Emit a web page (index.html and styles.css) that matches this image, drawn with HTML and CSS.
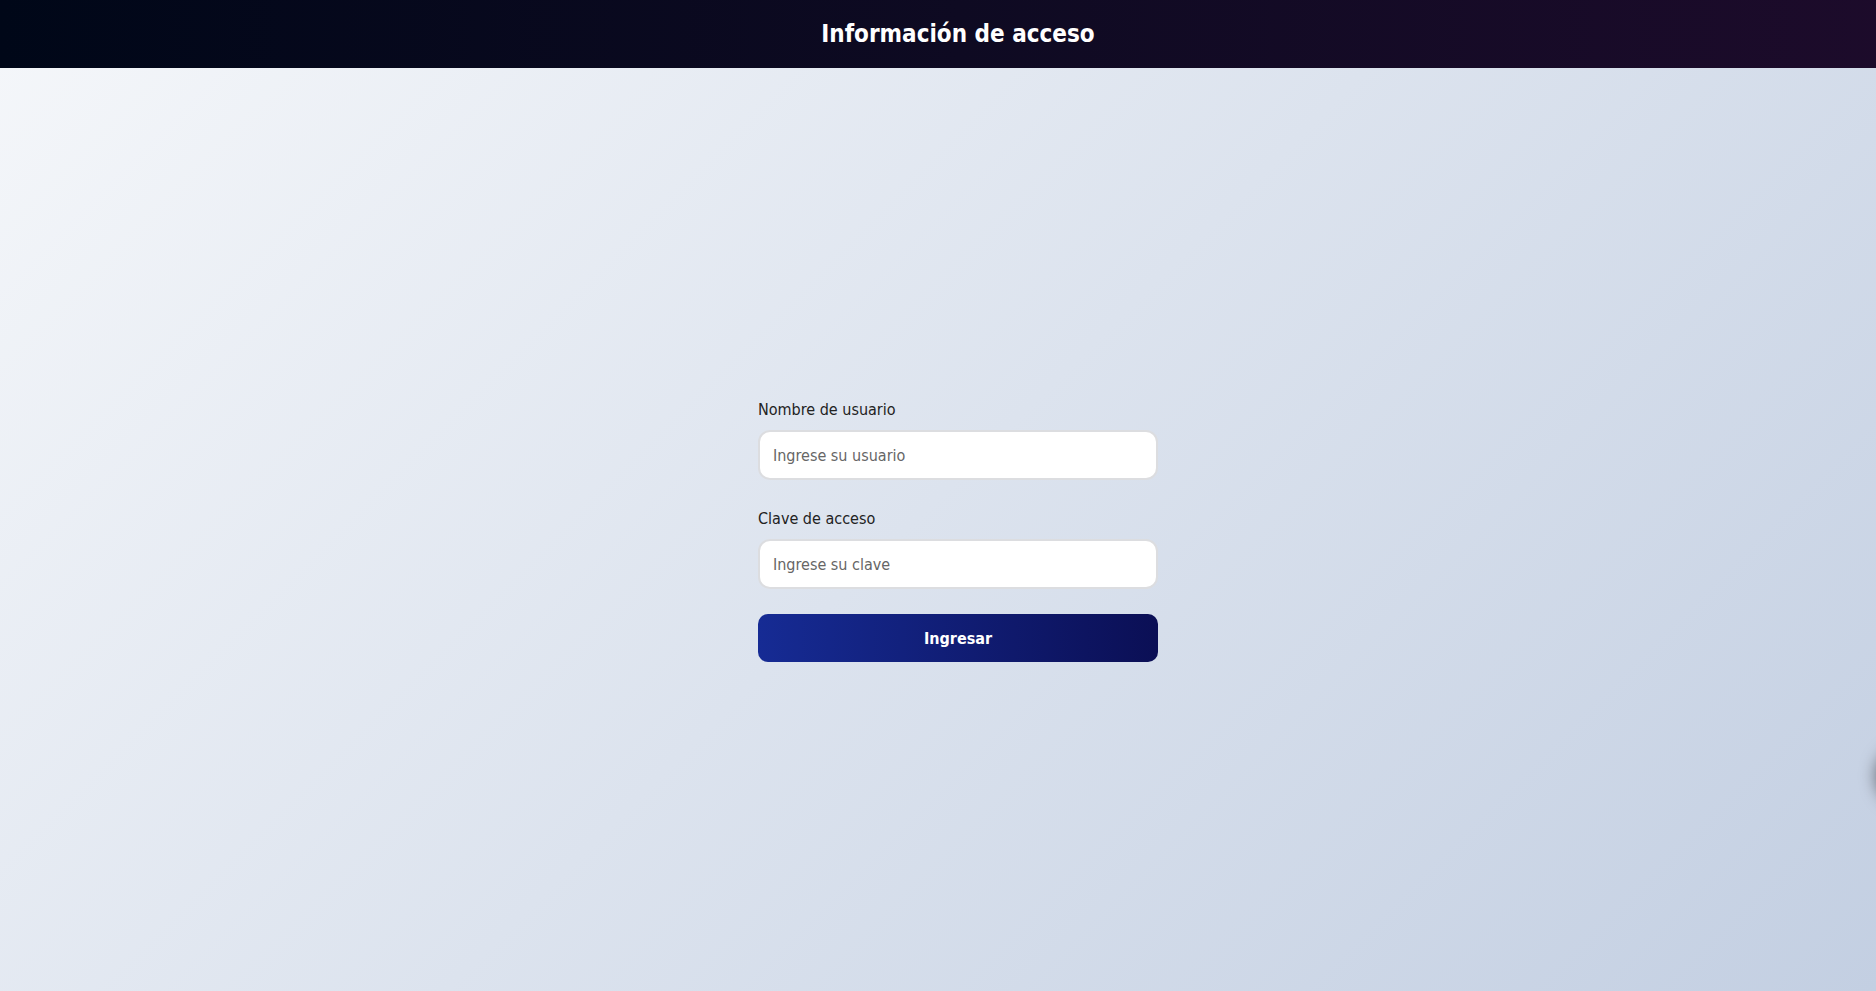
FILE: index.html
```html
<!DOCTYPE html>
<html lang="es">
<head>
<meta charset="utf-8">
<title>Información de acceso</title>
<link rel="stylesheet" href="styles.css">
</head>
<body>
<div class="app">
  <header class="topbar">
    <h1 class="title">Información de acceso</h1>
  </header>
  <main class="main">
    <form class="login" onsubmit="return false">
      <div class="field">
        <label class="label" for="user">Nombre de usuario</label>
        <input class="input" id="user" type="text" placeholder="Ingrese su usuario">
      </div>
      <div class="field">
        <label class="label" for="pass">Clave de acceso</label>
        <input class="input" id="pass" type="password" placeholder="Ingrese su clave">
      </div>
      <button class="submit" type="submit">Ingresar</button>
    </form>
  </main>
</div>
<div class="floating"></div>
</body>
</html>
```

FILE: styles.css
```css
html, body {
  margin: 0;
  padding: 0;
  height: 100%;
  overflow: hidden;
}

body {
  font-family: "DejaVu Sans Condensed", "DejaVu Sans", "Liberation Sans", sans-serif;
  background: linear-gradient(135deg, #f5f7fa 0%, #c3cfe2 100%);
}

.app {
  width: calc(100% + 40px);
  height: 100%;
  display: flex;
  flex-direction: column;
}

.topbar {
  height: 68px;
  flex: none;
  display: flex;
  align-items: center;
  justify-content: center;
  background: linear-gradient(90deg, #000718 0%, #0e0a22 50%, #1d0b2b 100%);
}

.title {
  margin: 0;
  color: #ffffff;
  font-size: 24px;
  font-weight: 700;
  line-height: 30px;
  letter-spacing: 0;
}

.main {
  flex: 1;
  display: flex;
  align-items: center;
  justify-content: center;
}

.login {
  width: 400px;
  display: flex;
  flex-direction: column;
  padding-top: 3px;
}

.field {
  display: flex;
  flex-direction: column;
  margin-bottom: 29px;
}

.field + .field {
  margin-bottom: 25px;
}

.label {
  font-size: 16px;
  line-height: 20px;
  color: #222;
  margin-bottom: 10px;
}

.input {
  box-sizing: border-box;
  height: 50px;
  width: 100%;
  padding: 0 13px;
  border: 2px solid #dcdde0;
  border-radius: 12px;
  background: #fff;
  font-family: inherit;
  font-size: 16px;
  color: #222;
  outline: none;
}

.input::placeholder {
  color: #666;
}

.submit {
  height: 48px;
  width: 100%;
  border: none;
  border-radius: 10px;
  background: linear-gradient(90deg, #162b94 0%, #0b0f55 100%);
  color: #fff;
  font-family: inherit;
  font-size: 16px;
  font-weight: 700;
  cursor: pointer;
}

.floating {
  position: fixed;
  right: -58px;
  top: 744px;
  width: 56px;
  height: 56px;
  border-radius: 50%;
  background: #3a4050;
  box-shadow: 0 4px 16px 2px rgba(0, 0, 0, 0.5);
}
```
